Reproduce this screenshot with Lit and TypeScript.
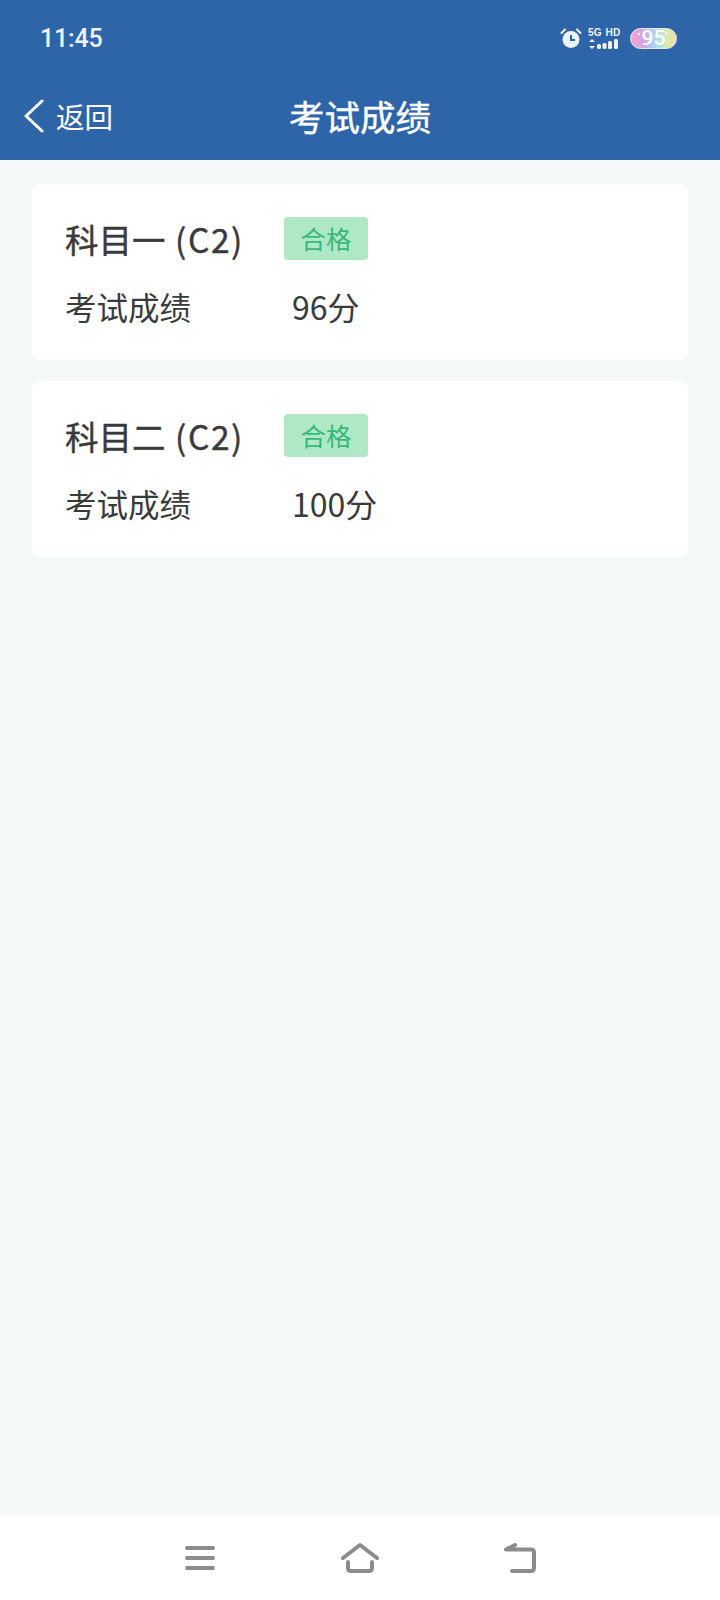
import { LitElement, html, css, svg } from "lit";
import { customElement } from "lit/decorators.js";

const SCORES = [
  { subject: "科目一", code: "(C2)", score: "96分" },
  { subject: "科目二", code: "(C2)", score: "100分" },
];

@customElement("app-root")
export class AppRoot extends LitElement {
  static styles = css`
    :host {
      display: block;
      font-family: "Noto Sans CJK SC", "Noto Sans", sans-serif;
    }
    .page {
      width: 720px;
      height: 1600px;
      display: flex;
      flex-direction: column;
      background: #f5f9fa;
    }
    .header {
      height: 160px;
      background: #2d65a8;
      color: #fff;
      display: flex;
      flex-direction: column;
      flex: none;
    }
    .status {
      height: 76px;
      padding: 0 43px 0 40px;
      display: flex;
      align-items: center;
      justify-content: space-between;
    }
    .time {
      font-family: Roboto, sans-serif;
      font-size: 25px;
      font-weight: 500;
      letter-spacing: -0.2px;
      color: #eef3f9;
    }
    .status-icons {
      display: flex;
      align-items: center;
      gap: 6px;
    }
    .net {
      display: flex;
      flex-direction: column;
      gap: 1px;
      width: 32px;
    }
    .net-label {
      font-family: "Liberation Sans", sans-serif;
      font-size: 11px;
      font-weight: 700;
      line-height: 11px;
      display: flex;
      justify-content: space-between;
      color: #eef3f9;
      transform: scaleX(0.92);
      transform-origin: left;
      width: 35px;
    }
    .battery {
      width: 47px;
      height: 21px;
      margin-left: 4px;
      border-radius: 11px;
      border: 1px solid #e8edf4;
      box-sizing: border-box;
      background:
        radial-gradient(circle at 8px 5px, #fff 0 1px, transparent 1.5px),
        radial-gradient(circle at 13px 15px, #fff 0 1px, transparent 1.5px),
        radial-gradient(circle at 35px 4px, #fff 0 1px, transparent 1.5px),
        linear-gradient(90deg, #f6a4c8, #cfa6ec 30%, #a8dcf0 55%, #d6efb0 80%, #f4d7a4);
      color: #fff;
      font-family: Roboto, sans-serif;
      font-size: 21px;
      font-weight: 500;
      line-height: 19px;
      text-align: center;
    }
    .nav {
      position: relative;
      flex: 1;
      display: flex;
      align-items: center;
      justify-content: center;
      padding-bottom: 4px;
    }
    .back {
      position: absolute;
      left: 24px;
      top: 20px;
      display: flex;
      align-items: center;
      gap: 12px;
      font-size: 28.5px;
      line-height: 40px;
    }
    .title {
      font-size: 35.5px;
      font-weight: 400;
      line-height: 44px;
      -webkit-text-stroke: 0.4px #fff;
    }
    .content {
      flex: 1;
      padding: 24px 32px 0;
      display: flex;
      flex-direction: column;
      gap: 21px;
    }
    .card {
      height: 176px;
      box-sizing: border-box;
      background: #fff;
      border-radius: 8px;
      padding: 33px 33px 0;
      color: #3a3a3a;
    }
    .row {
      display: grid;
      grid-template-columns: 219px auto;
      justify-content: start;
      align-items: center;
    }
    .row + .row {
      margin-top: 24px;
    }
    .subject {
      font-size: 33.5px;
      font-weight: 400;
      line-height: 43px;
      white-space: nowrap;
      -webkit-text-stroke: 0.4px #3a3a3a;
    }
    .code {
      letter-spacing: 1.6px;
      margin-left: 2px;
    }
    .badge {
      width: 84px;
      height: 43px;
      border-radius: 4px;
      background: #aee8c4;
      color: #37b97a;
      font-size: 25.5px;
      line-height: 42px;
      text-align: center;
    }
    .label {
      font-size: 31.5px;
      line-height: 45px;
    }
    .score {
      font-size: 32px;
      line-height: 45px;
      padding-left: 8px;
    }
    .navbar {
      height: 84px;
      flex: none;
      background: #fff;
      display: grid;
      grid-template-columns: repeat(3, 160px);
      justify-content: center;
      justify-items: center;
      align-items: center;
    }
    .navbar svg {
      display: block;
      fill: none;
      stroke: #8c8c8c;
      stroke-width: 4;
      stroke-linecap: round;
      stroke-linejoin: round;
    }
  `;

  private bars() {
    return svg`
      <path d="M4 0 L7 3 H1 Z M4 10 L1 7 H7 Z" fill="#eef3f9"/>
      <rect x="9" y="5" width="4" height="5" rx="1.5" fill="#eef3f9"/>
      <rect x="14.5" y="4" width="4" height="6" rx="1.5" fill="#eef3f9"/>
      <rect x="20" y="2" width="4" height="8" rx="1.5" fill="#eef3f9"/>
      <rect x="26" y="0" width="4" height="10" rx="1.5" fill="#eef3f9"/>
    `;
  }

  render() {
    return html`
      <div class="page">
        <div class="header">
          <div class="status">
            <span class="time">11:45</span>
            <div class="status-icons">
              <svg width="22" height="22" viewBox="0 0 22 22">
                <circle cx="11" cy="12.5" r="8.5" fill="#eef3f9" />
                <path d="M11 8 V13 H15" fill="none" stroke="#2d65a8" stroke-width="2" />
                <path d="M1.5 6 L5 2.5 M20.5 6 L17 2.5" stroke="#eef3f9" stroke-width="2" stroke-linecap="round" />
              </svg>
              <div class="net">
                <div class="net-label"><span>5G</span><span>HD</span></div>
                <svg width="32" height="10" viewBox="0 0 32 10">${this.bars()}</svg>
              </div>
              <div class="battery">95</div>
            </div>
          </div>
          <div class="nav">
            <div class="back">
              <svg width="20" height="34" viewBox="0 0 20 34" fill="none" stroke="#fff" stroke-width="3" stroke-linecap="round" stroke-linejoin="round">
                <path d="M18 2 L2 17 L18 32" />
              </svg>
              <span>返回</span>
            </div>
            <div class="title">考试成绩</div>
          </div>
        </div>
        <div class="content">
          ${SCORES.map(
            (s) => html`
              <div class="card">
                <div class="row">
                  <div class="subject">${s.subject} <span class="code">${s.code}</span></div>
                  <div class="badge">合格</div>
                </div>
                <div class="row">
                  <div class="label">考试成绩</div>
                  <div class="score">${s.score}</div>
                </div>
              </div>
            `,
          )}
        </div>
        <div class="navbar">
          <svg width="30" height="24" viewBox="0 0 30 24">
            <path d="M2 2 H28 M2 12 H28 M2 22 H28" />
          </svg>
          <svg width="38" height="30" viewBox="0 0 38 30">
            <path d="M2 15 L19 2 L36 15" />
            <path d="M7 19 V25 Q7 28 10 28 H28 Q31 28 31 25 V19" />
          </svg>
          <svg width="32" height="30" viewBox="0 0 32 30">
            <path d="M11 2 L2 6.5 H27 Q30 6.5 30 9.5 V25 Q30 28 27 28 H8" />
          </svg>
        </div>
      </div>
    `;
  }
}
